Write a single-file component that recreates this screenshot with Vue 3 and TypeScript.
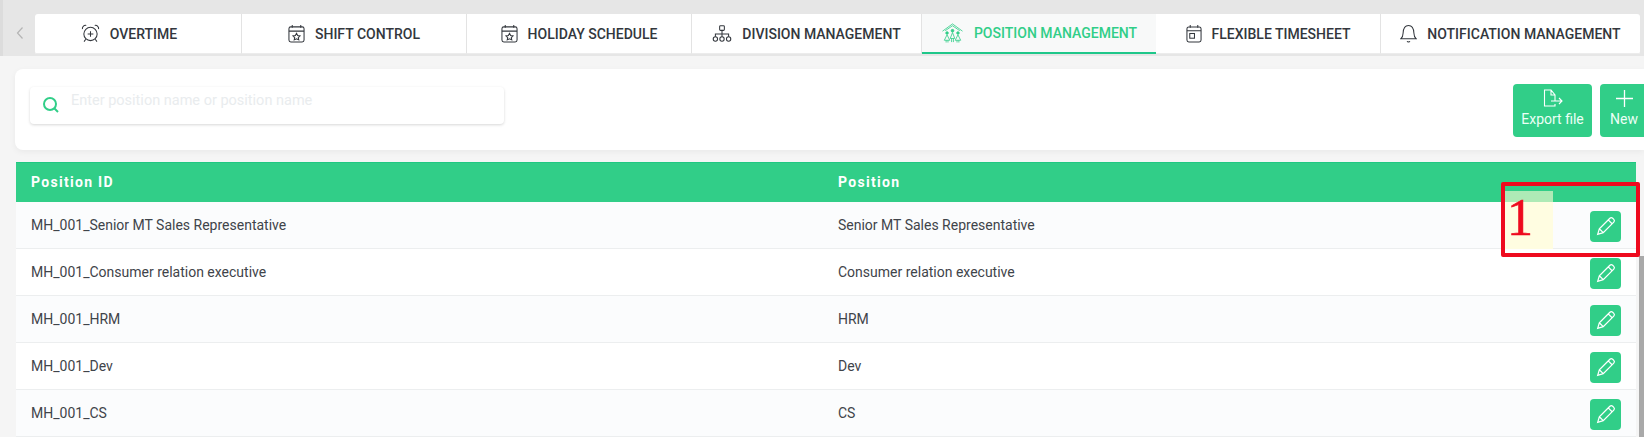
<script setup lang="ts">
interface Tab { label: string; icon: string; active?: boolean }
const tabs: Tab[] = [
  { label: 'Overtime', icon: 'clock' },
  { label: 'Shift control', icon: 'star' },
  { label: 'Holiday schedule', icon: 'star' },
  { label: 'Division management', icon: 'org' },
  { label: 'Position management', icon: 'house', active: true },
  { label: 'Flexible timesheet', icon: 'cal' },
  { label: 'Notification management', icon: 'bell' },
]
const rows = [
  ['MH_001_Senior MT Sales Representative', 'Senior MT Sales Representative'],
  ['MH_001_Consumer relation executive', 'Consumer relation executive'],
  ['MH_001_HRM', 'HRM'],
  ['MH_001_Dev', 'Dev'],
  ['MH_001_CS', 'CS'],
]
</script>

<template>
  <div class="page">
    <div class="topbar">
      <button class="back" aria-label="Back">
        <svg width="8" height="14" viewBox="0 0 8 14"><path d="M6.500 1.500 1.500 7l5 5.500" fill="none" stroke="#b4b4b4" stroke-width="1.200" /></svg>
      </button>
      <nav class="tabs">
        <div v-for="t in tabs" :key="t.label" class="tab" :class="{ active: t.active }">
          <svg v-if="t.icon === 'clock'" class="ico" width="19" height="19" viewBox="0 0 20 20" fill="none" stroke="currentColor" stroke-width="1.100">
            <circle cx="10" cy="10.500" r="7" />
            <path d="M10 7.500v6M7 10.500h6M1.500 5.500C1 3 3 1 5.500 1.500M18.500 5.500C19 3 17 1 14.500 1.500M5 16l-1.800 2.500M15 16l1.800 2.500" />
          </svg>
          <svg v-else-if="t.icon === 'star'" class="ico" width="17" height="19" viewBox="0 0 18 20" fill="none" stroke="currentColor" stroke-width="1.100">
            <rect x="1" y="3" width="16" height="16" rx="2" />
            <path d="M1 7.500h16M4.500 1v3M13.500 1v3" />
            <path d="m9 9.800 1.200 2.400 2.500.3-1.800 1.800.5 2.500L9 15.600l-2.400 1.200.5-2.500-1.800-1.800 2.500-.3z" />
          </svg>
          <svg v-else-if="t.icon === 'org'" class="ico" width="20" height="17" viewBox="0 0 20 18" fill="none" stroke="currentColor" stroke-width="1.100">
            <rect x="7.500" y="0.700" width="5" height="5" rx="1" />
            <circle cx="3" cy="14.800" r="2.300" /><circle cx="10" cy="14.800" r="2.300" /><circle cx="17" cy="14.800" r="2.300" />
            <path d="M10 5.700v6.800M3 12.500V9.500h14v3" />
          </svg>
          <svg v-else-if="t.icon === 'house'" class="ico" width="23" height="20" viewBox="0 0 24 22" fill="none" stroke="currentColor" stroke-width="0.900">
            <path d="M1 9 12 1l11 8M4 8.500 12 3l8 5.500" />
            <circle cx="12" cy="8.500" r="1.500" fill="currentColor" /><circle cx="6" cy="11" r="1.400" fill="currentColor" /><circle cx="18" cy="11" r="1.400" fill="currentColor" />
            <path d="M12 10.500 9.500 17h5zM11 17v4M13 17v4M6 13l-3 6h6zM5 19v2.500M7 19v2.500M18 13l-3 6h6zM17 19v2.500M19 19v2.500" />
          </svg>
          <svg v-else-if="t.icon === 'cal'" class="ico" width="16" height="19" viewBox="0 0 17 20" fill="none" stroke="currentColor" stroke-width="1.100">
            <rect x="1" y="3" width="15" height="16" rx="2" />
            <path d="M1 7h15M4.500 1v3M12.500 1v3" />
            <rect x="4" y="10" width="5" height="5" />
          </svg>
          <svg v-else class="ico" width="17" height="19" viewBox="0 0 18 20" fill="none" stroke="currentColor" stroke-width="1.100">
            <path d="M1 15.500c1.800-1.500 2.200-3 2.300-6C3.500 5 5.500 1.500 9 1.500s5.500 3.500 5.700 8c.1 3 .5 4.500 2.300 6zM7.500 18.200c.5 1 2.500 1 3 0" />
          </svg>
          <span>{{ t.label }}</span>
        </div>
      </nav>
    </div>

    <section class="filters">
      <div class="search">
        <svg width="18" height="18" viewBox="0 0 18 18" fill="none" stroke="#31ce88" stroke-width="2">
          <circle cx="8" cy="8" r="6" /><path d="m12.500 12.500 3.500 3.500" />
        </svg>
        <input class="search-input" placeholder="Enter position name or position name" />
      </div>
      <div class="actions">
        <button class="act export">
          <svg width="20" height="19" viewBox="0 0 20 19" fill="none" stroke="#fff" stroke-width="1.100">
            <path d="M12 12V6L8 1H1.500v16H12v-2M8 1v5h4M8 12h11m-3-3 3 3-3 3" />
          </svg>
          <span>Export file</span>
        </button>
        <button class="act new">
          <svg width="19" height="19" viewBox="0 0 19 19" stroke="#fff" stroke-width="1.300"><path d="M9.500 1v17M1 9.500h17" /></svg>
          <span>New</span>
        </button>
      </div>
    </section>

    <section class="table">
      <div class="thead">
        <div>Position ID</div>
        <div>Position</div>
      </div>
      <div v-for="r in rows" :key="r[0]" class="row">
        <div>{{ r[0] }}</div>
        <div>{{ r[1] }}</div>
        <button class="edit" aria-label="Edit">
          <svg width="20" height="20" viewBox="0 0 18 18" fill="none" stroke="#fff" stroke-width="1.100">
            <path d="M1.500 16.500 3 11.500 12.500 2a1.800 1.800 0 0 1 2.500 0l1 1a1.800 1.800 0 0 1 0 2.500L6.500 15zM3 11.500 6.500 15M11 3.500 14.500 7" />
          </svg>
        </button>
      </div>
    </section>

    <div class="scrollbar"></div>
    <div class="note">
      <div class="note-top"></div>
      <div class="note-num">1</div>
    </div>
  </div>
</template>

<style>
html, body { margin: 0; background: #f5f5f5; overflow: hidden; }
</style>

<style scoped>
.page {
  position: relative;
  width: 1644px;
  height: 437px;
  overflow: hidden;
  background: #f5f5f5;
  font-family: Roboto, "Liberation Sans", sans-serif;
  color: #3a3f45;
}
.topbar {
  display: flex;
  height: 56px;
  padding-top: 14px;
  box-sizing: border-box;
  background: #e6e6e6;
  border-left: 3px solid #dcdcdc;
}
.back {
  width: 32px;
  height: 40px;
  padding: 0 0 0 13px;
  border: 0;
  background: transparent;
  text-align: left;
}
.tabs {
  display: grid;
  grid-template-columns: 207px 225px 225px 230px 234px 225px 259px;
  height: 40px;
  background: #fff;
  border-radius: 3px;
}
.tab {
  display: flex;
  align-items: center;
  justify-content: center;
  gap: 10px;
  height: 40px;
  box-sizing: border-box;
  border-right: 1px solid #e3e3e3;
  border-bottom: 1px solid #ececec;
  font-size: 14px;
  font-weight: 500;
  text-transform: uppercase;
  color: #33373d;
  white-space: nowrap;
}
.tab:first-child { padding-right: 18px; }
.tab:last-child { border-right: 0; }
.tab.active {
  color: #31ce88;
  background: #f8f9f9;
  border-bottom: 2px solid #1fc78a;
  border-right: 0;
}
.ico { flex: none; }
.filters {
  display: flex;
  justify-content: space-between;
  align-items: flex-start;
  height: 81px;
  box-sizing: border-box;
  margin: 13px 0 0 15px;
  padding: 18px 0 0 15px;
  background: #fff;
  border-radius: 8px 0 0 8px;
  box-shadow: 0 2px 6px rgba(0, 0, 0, 0.05);
}
.search {
  display: flex;
  align-items: center;
  gap: 9px;
  width: 474px;
  height: 37px;
  box-sizing: border-box;
  padding-left: 12px;
  border-radius: 4px;
  background: #fff;
  box-shadow: 0 1px 3px rgba(0, 0, 0, 0.16);
}
.search svg { margin-top: -2px; flex: none; }
.search-input {
  flex: 1;
  min-width: 0;
  border: 0;
  outline: 0;
  background: transparent;
  font: 14.500px Roboto, sans-serif;
  margin-top: -10px;
}
.search-input::placeholder { color: #e9ecee; opacity: 1; }
.actions {
  display: flex;
  gap: 8px;
  margin-top: -3px;
}
.act {
  display: flex;
  flex-direction: column;
  align-items: center;
  justify-content: flex-start;
  gap: 3px;
  height: 53px;
  padding: 5px 0 0;
  border: 0;
  border-radius: 4px;
  background: #31ce88;
  color: #ecfff6;
  font: 14px Roboto, sans-serif;
}
.export { width: 79px; }
.new { width: 52px; margin-right: -8px; padding-right: 4px; border-radius: 4px 0 0 4px; }
.table {
  margin: 12px 8px 0 16px;
  background: #fff;
}
.thead, .row {
  display: grid;
  grid-template-columns: 807px 1fr 46px;
  align-items: center;
  padding-left: 15px;
}
.thead {
  height: 40px;
  padding-bottom: 2px;
  background: #31ce88;
  border-top: 1px solid #1fc781;
  box-sizing: border-box;
  color: #fff;
  font-size: 14px;
  font-weight: 700;
  letter-spacing: 1.300px;
}
.row {
  height: 47px;
  box-sizing: border-box;
  border-bottom: 1px solid #eceeef;
  font-size: 14px;
  color: #3f444a;
}
.row:nth-child(even) { background: #fbfcfd; }
.edit {
  display: flex;
  align-items: center;
  justify-content: center;
  width: 31px;
  height: 31px;
  margin-top: 2px;
  padding: 0;
  border: 0;
  border-radius: 4px;
  background: #31ce88;
}
.scrollbar {
  position: absolute;
  top: 256px;
  right: 0;
  bottom: 0;
  width: 5px;
  background: #a9a9a9;
}
.note {
  position: absolute;
  left: 1501px;
  top: 182px;
  width: 139px;
  height: 75px;
  box-sizing: border-box;
  border: 4px solid #ee0a1e;
  border-radius: 2px;
}
.note-top {
  position: absolute;
  left: 0;
  top: 5px;
  width: 48px;
  height: 11px;
  background: #aeeab6;
}
.note-num {
  position: absolute;
  left: 0;
  top: 16px;
  width: 48px;
  height: 47px;
  padding-left: 2px;
  box-sizing: border-box;
  background: #fffde1;
  color: #ee0a1e;
  font: 52px/31px "Liberation Serif", serif;
  -webkit-text-stroke: 0.600px #ee0a1e;
}
</style>
